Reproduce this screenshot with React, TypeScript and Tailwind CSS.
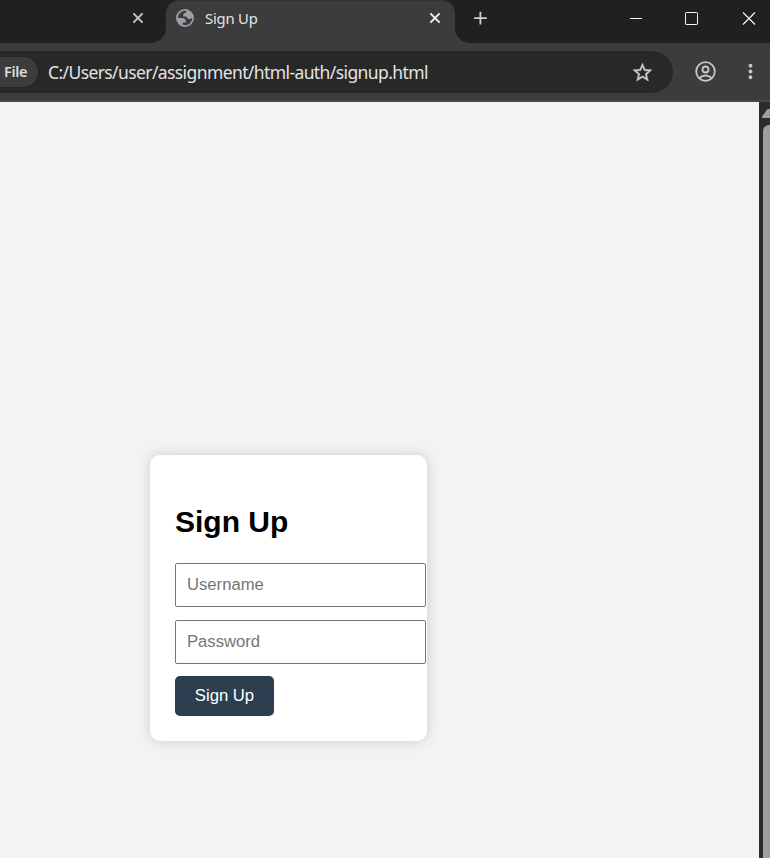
import React from "react";
import { MdStarOutline, MdMoreVert } from "react-icons/md";

function Globe() {
  return (
    <svg viewBox="2 2 20 20" className="ml-[10px] h-[18px] w-[18px] shrink-0">
      <path
        fillRule="evenodd"
        fill="#9aa0a6"
        d="M12 2a10 10 0 1 1 0 20 10 10 0 0 1 0-20zM4 12h4.4c3.407.022 4.922 1.73 4.543 5.127H9.488v2.47a8.004 8.004 0 0 0 10.498-8.083C19.327 12.504 18.332 13 17 13c-2.137 0-3.206-.916-3.206-2.75h-3.748c-.274-2.728.683-4.092 2.87-4.092 0-.975.327-1.597.811-1.97A8.004 8.004 0 0 0 4 12z"
      />
    </svg>
  );
}

function CloseMark({ className }: { className: string }) {
  return (
    <svg viewBox="0 0 16 16" className={className} fill="none" stroke="currentColor" strokeWidth="1.9">
      <path d="M3.4 3.4L12.6 12.6M12.6 3.4L3.4 12.6" />
    </svg>
  );
}

function TabStrip() {
  return (
    <div className="flex h-[43px] bg-[#3c3c3c]">
      <div className="flex h-[43px] w-[166px] justify-end rounded-br-[15px] bg-[#1f2120] pr-[20px] pt-[10px]">
        <CloseMark className="h-4 w-4 text-[#c7c7c7]" />
      </div>
      <div className="h-full w-[289px] bg-[#1f2120]">
        <div className="flex h-full rounded-t-[13px] border-t border-[#333333] bg-[#3c3c3c] pt-[8px]">
          <Globe />
          <span className="ml-[11px] mt-[-1px] w-[220px] whitespace-nowrap font-['Noto_Sans',sans-serif] text-[14.8px] leading-5 tracking-[-0.2px] text-[#e3e3e3]">Sign Up</span>
          <CloseMark className="ml-[2px] mt-[1px] h-4 w-4 text-[#f0f0f0]" />
        </div>
      </div>
      <div className="flex h-full flex-1 rounded-bl-[15px] bg-[#1f2120]">
        <svg viewBox="0 0 18 18" className="ml-[16px] mt-[9px] h-[18px] w-[18px]" fill="none" stroke="#cfcfcf" strokeWidth="1.8">
          <path d="M9.4 2.8V15.6M3 9.2H15.8" />
        </svg>
        <svg viewBox="0 0 140 38" className="ml-auto h-[38px] w-[140px]" fill="none" stroke="#f5f5f5">
          <path d="M-1 18.5H12" />
          <rect x="55.5" y="12.5" width="12" height="12" rx="0.7" />
          <path d="M113 12.5L125 24.5M125 12.5L113 24.5" strokeWidth="1.2" />
        </svg>
      </div>
    </div>
  );
}

function Toolbar() {
  return (
    <div className="flex h-[59px] border-b-2 border-[#484848] bg-[#3c3c3c] pt-2">
      <div className="flex h-[42px] w-[673px] items-center rounded-r-full bg-[#282828]">
        <div className="flex h-[30px] w-[38px] items-center rounded-r-full bg-[#3c3c3c] pl-1 font-['Noto_Sans',sans-serif] text-[14.5px] font-semibold tracking-[-0.35px] text-[#dedede]">File</div>
        <span className="ml-[10px] whitespace-nowrap font-['Noto_Sans',sans-serif] text-[17.5px] tracking-[-0.6px] text-[#e3e3e3]">C:/Users/user/assignment/html-auth/signup.html</span>
        <MdStarOutline className="ml-auto mr-[19px] h-[23px] w-[23px] text-[#c7c7c7]" stroke="currentColor" strokeWidth="0.4" />
      </div>
      <svg viewBox="0 0 22 22" className="ml-[22px] mt-[9px] h-[22px] w-[22px]" fill="none" stroke="#c7c7c7" strokeWidth="1.8">
        <circle cx="10.5" cy="11.5" r="9.3" />
        <circle cx="10.5" cy="9.5" r="3" />
        <path d="M4.3 18Q10.5 13 16.7 18" />
      </svg>
      <MdMoreVert className="ml-[22px] mt-[9px] h-[23px] w-[23px] text-[#c7c7c7]" />
    </div>
  );
}

function SignUpCard() {
  const field =
    "mb-[13px] block h-[44px] w-[251px] rounded-[2px] border border-[#767676] bg-white px-[11px] text-[16.67px] text-black outline-none placeholder:text-[#757575]";
  return (
    <form className="ml-[150px] mt-[353px] h-[286px] w-[277px] rounded-[10px] bg-white pl-[25px] pt-[50px] font-['Liberation_Sans',Arial,sans-serif] shadow-[0_0_13px_rgba(0,0,0,0.16)]">
      <h2 className="mb-[24px] text-[30px] font-bold leading-[34px] text-black">Sign Up</h2>
      <input className={field} placeholder="Username" />
      <input className={field} type="password" placeholder="Password" />
      <button type="button" className="-mt-px block h-[40px] w-[99px] rounded-[5px] bg-[#2c3e50] pb-[2px] text-[16.67px] text-white">Sign Up</button>
    </form>
  );
}

export default function App() {
  return (
    <div className="flex h-[858px] w-[770px] flex-col overflow-hidden">
      <TabStrip />
      <Toolbar />
      <div className="flex flex-1">
        <main className="w-[759px] bg-[#f3f3f3]">
          <SignUpCard />
        </main>
        <div className="flex w-[11px] flex-col overflow-hidden bg-[#2c2c2c] pl-[3px] pt-[6px]">
          <svg viewBox="0 0 16 10" className="h-[10px] w-[16px] shrink-0">
            <path d="M7 1Q8 0 9 1L15 8.5Q15.5 10 14 10H1Q-.5 10 0 8.5L5.5 1Z" fill="#9f9f9f" />
          </svg>
          <div className="ml-px mt-[7px] w-4 flex-1 rounded-tl-[6px] bg-[#9f9f9f]" />
        </div>
      </div>
    </div>
  );
}
